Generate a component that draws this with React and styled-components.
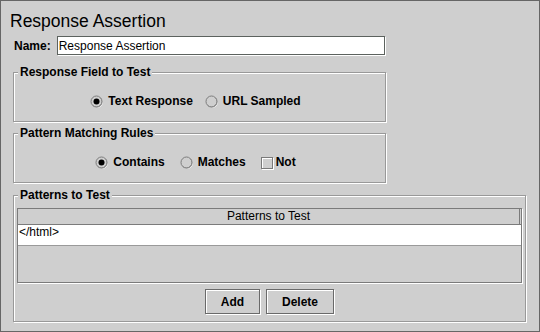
import React from "react";
import styled, { createGlobalStyle } from "styled-components";

const BG = "#cfcfcf";

const GlobalStyle = createGlobalStyle`
  html, body { margin: 0; padding: 0; background: ${BG}; }
  body { font-family: "Liberation Sans", Arial, sans-serif; font-size: 12px; color: #000; }
  *, *::before, *::after { box-sizing: border-box; }
`;

const Frame = styled.div`
  width: 540px;
  height: 332px;
  border: 1px solid #666;
  background: ${BG};
  padding: 10px 0 0 9px;
  display: flex;
  flex-direction: column;
  align-items: flex-start;
`;

const Title = styled.h1`
  margin: 0;
  font-size: 17.5px;
  line-height: 20px;
  font-weight: normal;
  color: #000;
`;

const NameRow = styled.div`
  margin: 5px 0 0 4px;
  height: 19px;
  display: flex;
  align-items: center;
  gap: 6px;
`;

const Label = styled.label`
  font-weight: bold;
  font-size: 12px;
`;

const TextField = styled.input`
  width: 328px;
  height: 19px;
  margin: 0;
  border: 1px solid #5c625e;
  background: #fff;
  padding: 0 1px;
  font: 12px "Liberation Sans", Arial, sans-serif;
  color: #000;
  outline: none;
  box-shadow: 1px 1px 0 #fff;
`;

const Group = styled.fieldset`
  margin: ${(p) => p.$mt}px 0 0 3px;
  width: ${(p) => p.$w}px;
  min-width: 0;
  padding: 0;
  border: 1px solid #999;
  box-shadow: inset 1px 1px 0 #fff, 1px 1px 0 #fff;
`;

const Legend = styled.legend`
  margin-left: 4px;
  padding: 0 2px;
  font-weight: bold;
  font-size: 12px;
  line-height: 15px;
  background: ${BG};
`;

const ChoiceRow = styled.div`
  height: 17px;
  margin: 13px 0 11px;
  padding-right: 8px;
  display: flex;
  justify-content: center;
  align-items: center;
  gap: ${(p) => p.$gap}px;
`;

const Choice = styled.label`
  display: inline-flex;
  align-items: center;
  gap: ${(p) => p.$gap ?? 4}px;
  font-weight: bold;
  font-size: 12px;
  line-height: 17px;
`;

const Box = styled.span`
  display: inline-block;
  width: 12px;
  height: 12px;
  border: 1px solid #7a7a7a;
  box-shadow: inset 1px 1px 0 #fff, 1px 1px 0 #fff;
`;

const RadioSvg = styled.svg`
  display: block;
  flex: none;
`;

const Radio = ({ checked }) => (
  <RadioSvg width="14" height="14" viewBox="0 0 14 14">
    <circle cx="7" cy="7" r="5.5" fill="none" stroke="#fff" />
    <circle cx="6.5" cy="6.5" r="5.5" fill={BG} stroke="#7a7a7a" />
    <path d="M10.4 2.6 A5.5 5.5 0 0 1 2.6 10.4" fill="none" stroke="#8a8a8a" />
    {checked && <circle cx="6.5" cy="6.5" r="3" fill="#000" />}
  </RadioSvg>
);

const Table = styled.div`
  margin: 5px 3px 0 3px;
  height: 75px;
  border: 1px solid #7b7b7b;
  box-shadow: 1px 1px 0 #fff;
  display: flex;
  flex-direction: column;
`;

const Header = styled.div`
  height: 16px;
  display: flex;
  border-bottom: 1px solid #7b7b7b;
`;

const HeaderCell = styled.div`
  flex: 1;
  margin-right: 1px;
  border-right: 1px solid #7b7b7b;
  text-align: center;
  font-size: 12px;
  line-height: 15px;
`;

const Row = styled.div`
  height: 21px;
  background: #fff;
  border-bottom: 1px solid #9a9a9a;
  padding-left: 1px;
  font-size: 12px;
  line-height: 14px;
`;

const ButtonRow = styled.div`
  margin-top: 6px;
  padding-bottom: 7px;
  display: flex;
  justify-content: center;
  gap: 6px;
`;

const Button = styled.button`
  width: ${(p) => p.$w}px;
  height: 25px;
  margin: 0;
  padding: 0;
  border: 1px solid #6a6a6a;
  background: ${BG};
  box-shadow: inset 1px 1px 0 #fff, 1px 1px 0 #fff;
  font: bold 12px "Liberation Sans", Arial, sans-serif;
  color: #000;
`;

export default function App() {
  return (
    <>
      <GlobalStyle />
      <Frame>
        <Title>Response Assertion</Title>
        <NameRow>
          <Label>Name:</Label>
          <TextField defaultValue="Response Assertion" />
        </NameRow>

        <Group $mt={10} $w={373}>
          <Legend>Response Field to Test</Legend>
          <ChoiceRow $gap={12}>
            <Choice><Radio checked />Text Response</Choice>
            <Choice><Radio />URL Sampled</Choice>
          </ChoiceRow>
        </Group>

        <Group $mt={4} $w={373}>
          <Legend>Pattern Matching Rules</Legend>
          <ChoiceRow $gap={15}>
            <Choice><Radio checked />Contains</Choice>
            <Choice><Radio />Matches</Choice>
            <Choice $gap={3}><Box />Not</Choice>
          </ChoiceRow>
        </Group>

        <Group $mt={5} $w={513}>
          <Legend>Patterns to Test</Legend>
          <Table>
            <Header>
              <HeaderCell>Patterns to Test</HeaderCell>
            </Header>
            <Row>&lt;/html&gt;</Row>
          </Table>
          <ButtonRow>
            <Button $w={55}>Add</Button>
            <Button $w={68}>Delete</Button>
          </ButtonRow>
        </Group>
      </Frame>
    </>
  );
}
